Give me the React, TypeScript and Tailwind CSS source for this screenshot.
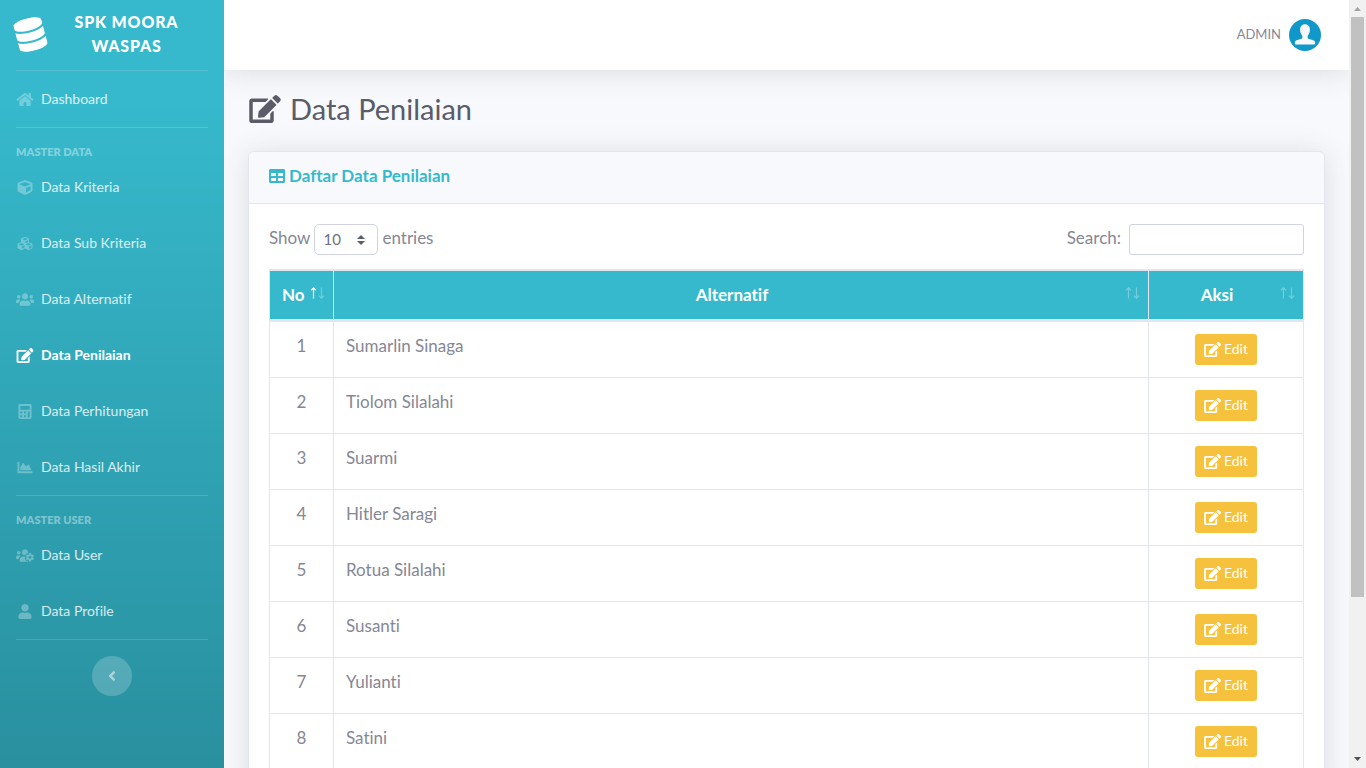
import { useState } from 'react';
import type { IconType } from 'react-icons';
import {
  FaAngleLeft,
  FaCalculator,
  FaChartArea,
  FaCube,
  FaCubes,
  FaDatabase,
  FaEdit,
  FaHome,
  FaTable,
  FaUser,
  FaUsers,
  FaUsersCog,
} from 'react-icons/fa';

type NavItem = {
  label: string;
  icon: IconType;
};

const masterData: NavItem[] = [
  { label: 'Data Kriteria', icon: FaCube },
  { label: 'Data Sub Kriteria', icon: FaCubes },
  { label: 'Data Alternatif', icon: FaUsers },
  { label: 'Data Penilaian', icon: FaEdit },
  { label: 'Data Perhitungan', icon: FaCalculator },
  { label: 'Data Hasil Akhir', icon: FaChartArea },
];

const masterUser: NavItem[] = [
  { label: 'Data User', icon: FaUsersCog },
  { label: 'Data Profile', icon: FaUser },
];

const alternatives = [
  'Sumarlin Sinaga',
  'Tiolom Silalahi',
  'Suarmi',
  'Hitler Saragi',
  'Rotua Silalahi',
  'Susanti',
  'Yulianti',
  'Satini',
];

function NavLink({ label, icon: Icon, active = false }: NavItem & { active?: boolean }) {
  return (
    <a
      href="#"
      className={`flex h-14 items-center gap-[7px] px-4 text-sm ${active ? 'font-bold text-white' : 'text-white/80'}`}
    >
      <Icon className={`h-[15px] w-[18px] ${active ? 'text-white' : 'text-white/30'}`} />
      <span>{label}</span>
    </a>
  );
}

function Divider() {
  return <hr className="mx-4 border-t border-white/15" />;
}

function NavHeading({ children }: { children: string }) {
  return <div className="px-4 pt-4 text-[11px] leading-[15px] font-extrabold text-white/40 uppercase">{children}</div>;
}

function Sidebar() {
  return (
    <aside className="flex w-56 shrink-0 flex-col bg-linear-to-b from-[#36b9cc] from-[13%] to-[#258391] to-[127%]">
      <a href="#" className="flex h-[70px] items-center px-4 pb-0.5 text-white">
        <FaDatabase className="h-[33px] w-[29px] shrink-0 -rotate-15" />
        <span className="flex-1 px-4 text-center text-base leading-6 font-black tracking-wider uppercase">
          SPK Moora Waspas
        </span>
      </a>
      <Divider />
      <nav>
        <NavLink label="Dashboard" icon={FaHome} />
        <Divider />
        <NavHeading>Master Data</NavHeading>
        {masterData.map((item) => (
          <NavLink key={item.label} {...item} active={item.label === 'Data Penilaian'} />
        ))}
        <Divider />
        <NavHeading>Master User</NavHeading>
        {masterUser.map((item) => (
          <NavLink key={item.label} {...item} />
        ))}
        <Divider />
      </nav>
      <button
        type="button"
        aria-label="Toggle sidebar"
        className="mt-4 flex size-10 items-center justify-center self-center rounded-full bg-white/20 text-white/50"
      >
        <FaAngleLeft className="size-4" />
      </button>
    </aside>
  );
}

function Avatar() {
  return (
    <svg viewBox="0 0 32 32" className="size-8" aria-hidden="true">
      <circle cx="16" cy="16" r="16" fill="#0f98c9" />
      <path
        d="M16 5.2c3 0 4.900 2.200 4.900 5.500 0 2.400-.9 4.600-2.200 5.900v2c0 .8.500 1.200 1.400 1.400l3.600.9c1.700.4 2.500 1.500 2.500 3 0 1-.6 1.600-1.600 1.600H7.400c-1 0-1.600-.6-1.600-1.600 0-1.500.8-2.600 2.500-3l3.600-.9c.9-.2 1.400-.6 1.400-1.400v-2c-1.300-1.300-2.200-3.500-2.200-5.900 0-3.300 1.900-5.500 4.900-5.500z"
        fill="#f8f9fc"
      />
    </svg>
  );
}

function SortArrows({ ascending = false }: { ascending?: boolean }) {
  return (
    <svg
      viewBox="0 0 16 12"
      fill="none"
      stroke="#fff"
      strokeWidth="1.2"
      className="absolute top-4 right-2 h-3 w-4"
      aria-hidden="true"
    >
      <path d="M4.500 11.500V1M2 3.200L4.500.9 7 3.200" strokeOpacity={ascending ? 1 : 0.3} />
      <path d="M12.500 .5V11M10 8.800l2.500 2.300L15 8.800" strokeOpacity="0.3" />
    </svg>
  );
}

function DataTable({ rows }: { rows: string[] }) {
  return (
    <table className="mt-[14px] w-full table-fixed border-separate border-spacing-0 border border-[#e3e6f0] text-[17px] leading-6">
      <colgroup>
        <col className="w-16" />
        <col />
        <col className="w-[154px]" />
      </colgroup>
      <thead>
        <tr className="bg-[#36b9cc] text-white">
          {['No', 'Alternatif', 'Aksi'].map((title, i) => (
            <th
              key={title}
              className="relative border-t border-r border-b-2 border-[#e3e6f0] py-3 pr-[30px] pl-3 text-center font-bold last:border-r-0"
            >
              {title}
              <SortArrows ascending={i === 0} />
            </th>
          ))}
        </tr>
      </thead>
      <tbody>
        {rows.map((name, i) => (
          <tr key={name}>
            <td className="border-t border-r border-[#e3e6f0] p-3 text-center align-top">{i + 1}</td>
            <td className="border-t border-r border-[#e3e6f0] p-3 align-top">{name}</td>
            <td className="border-t border-[#e3e6f0] p-3 align-top">
              <button
                type="button"
                className="mx-auto flex h-[31px] items-center gap-[3px] rounded-[3px] bg-[#f6c23e] px-[9px] pb-px text-sm text-white"
              >
                <FaEdit className="h-[15px] w-[17px]" />
                Edit
              </button>
            </td>
          </tr>
        ))}
      </tbody>
    </table>
  );
}

function ScrollRail() {
  return (
    <div className="flex w-[17px] shrink-0 flex-col items-center bg-[#f1f1f1]" aria-hidden="true">
      <svg viewBox="0 0 17 17" className="size-[17px] shrink-0">
        <path d="M5 11h7L8.500 7z" fill="#a3a3a3" />
      </svg>
      <div className="min-h-0 w-[13px] flex-1">
        <div className="h-[79%] bg-[#c1c1c1]" />
      </div>
      <svg viewBox="0 0 17 17" className="size-[17px] shrink-0">
        <path d="M5 6h7L8.500 10z" fill="#505050" />
      </svg>
    </div>
  );
}

export default function App() {
  const [search, setSearch] = useState('');
  const [pageSize, setPageSize] = useState('10');

  const rows = alternatives
    .filter((name) => name.toLowerCase().includes(search.toLowerCase()))
    .slice(0, Number(pageSize));

  return (
    <div className="flex h-screen overflow-hidden bg-[#f8f9fc] font-['Lato',sans-serif] text-base text-[#858796] [font-variant-ligatures:none]">
      <Sidebar />

      <div className="min-w-0 flex-1 overflow-y-auto [scrollbar-width:none]">
        <header className="flex h-[70px] items-center justify-end gap-2 bg-white pr-7 shadow-[0_2px_28px_rgba(58,59,69,0.15)]">
          <span className="text-[13px]">ADMIN</span>
          <Avatar />
        </header>

        <main className="p-6">
          <h1 className="flex h-[30px] items-center gap-2 text-[29px] text-[#5a5c69]">
            <FaEdit className="h-7 w-[34px]" />
            Data Penilaian
          </h1>

          <section className="mt-[27px] rounded-md border border-[#e3e6f0] bg-white shadow-[0_2px_28px_rgba(58,59,69,0.15)]">
            <h2 className="flex h-[52px] items-center gap-1 rounded-t-md border-b border-[#e3e6f0] bg-[#f8f9fc] px-5 pb-1 text-[17px] font-bold text-[#36b9cc]">
              <FaTable className="size-4" />
              Daftar Data Penilaian
            </h2>

            <div className="p-5">
              <div className="flex items-start justify-between text-[17px] leading-7">
                <label className="flex items-start gap-1">
                  Show
                  <span className="relative">
                    <select
                      value={pageSize}
                      onChange={(e) => setPageSize(e.target.value)}
                      className="block h-[31px] w-16 appearance-none rounded-[5px] border border-[#d1d3e2] bg-white px-2 pb-px text-[15px] text-[#6e707e]"
                    >
                      <option>10</option>
                      <option>25</option>
                      <option>50</option>
                      <option>100</option>
                    </select>
                    <svg
                      viewBox="0 0 8 10"
                      className="pointer-events-none absolute top-[11px] right-[13px] h-[10px] w-2"
                      aria-hidden="true"
                    >
                      <path d="M4 0L0 4h8zM0 6l4 4 4-4z" fill="#5a5c69" />
                    </svg>
                  </span>
                  entries
                </label>
                <label className="flex items-start gap-2">
                  Search:
                  <input
                    type="search"
                    value={search}
                    onChange={(e) => setSearch(e.target.value)}
                    className="h-[31px] w-[175px] rounded-[3px] border border-[#d1d3e2] bg-white px-2 text-sm text-[#6e707e]"
                  />
                </label>
              </div>

              <DataTable rows={rows} />
            </div>
          </section>
        </main>
      </div>

      <ScrollRail />
    </div>
  );
}
